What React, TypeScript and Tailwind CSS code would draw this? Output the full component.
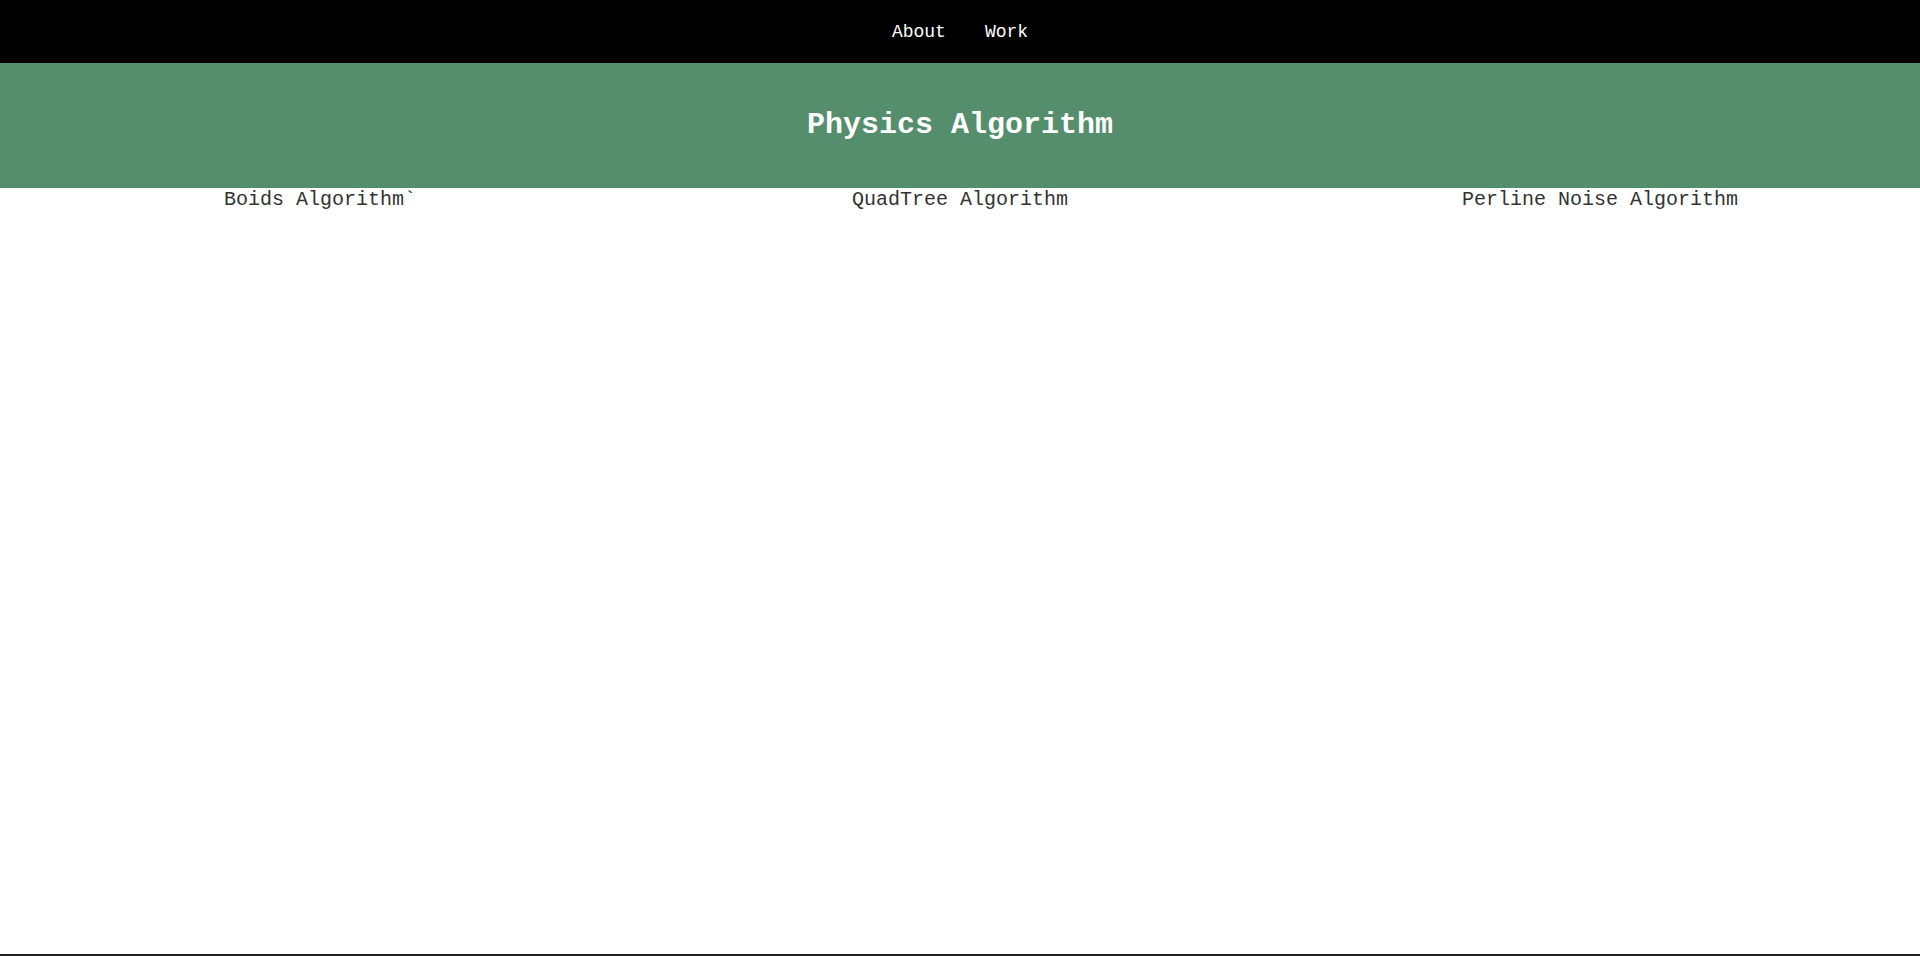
const links = [
  { href: '#about', label: 'About' },
  { href: '#work', label: 'Work' },
]

const algorithms = ['Boids Algorithm`', 'QuadTree Algorithm', 'Perline Noise Algorithm']

export default function App() {
  return (
    <div className="flex min-h-screen flex-col bg-white font-['Liberation_Mono','Courier_New',monospace]">
      {/* Top nav */}
      <nav className="flex h-[63px] items-center justify-center gap-[39px] bg-black pt-[2px] text-[18px] text-white">
        {links.map((link) => (
          <a key={link.href} href={link.href}>
            {link.label}
          </a>
        ))}
      </nav>

      {/* Banner */}
      <header className="flex h-[125px] items-center justify-center bg-[#548e6d]">
        <h1 className="text-[30px] font-bold text-white">Physics Algorithm</h1>
      </header>

      {/* Algorithm list */}
      <main className="grid flex-1 grid-cols-3 content-start text-[20px] leading-[23px] text-[#333]">
        {algorithms.map((name) => (
          <div key={name} className="text-center">
            {name}
          </div>
        ))}
      </main>

      <footer className="h-[2px] bg-[#222]" />
    </div>
  )
}
